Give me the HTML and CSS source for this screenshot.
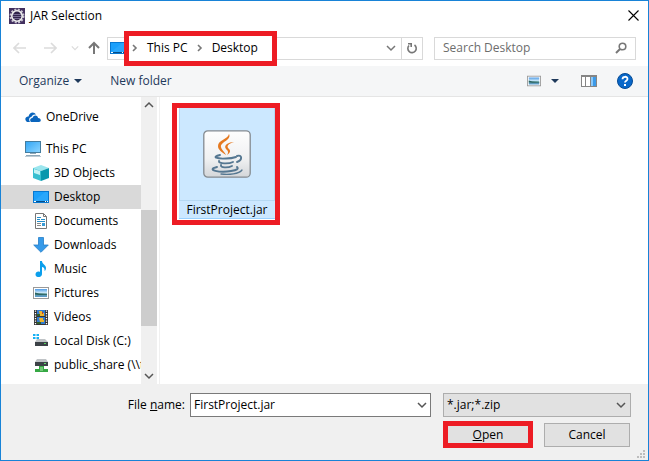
FILE: index.html
```html
<!DOCTYPE html>
<html lang="en">
<head>
<meta charset="utf-8">
<meta name="viewport" content="width=device-width, initial-scale=1">
<title>JAR Selection</title>
<link rel="stylesheet" href="styles.css">
</head>
<body>
<svg class="defs" width="0" height="0" aria-hidden="true">
  <defs>
    <linearGradient id="sky" x1="0" y1="0" x2="0" y2="1"><stop offset="0" stop-color="#4f9be6"/><stop offset=".5" stop-color="#d5eefa"/><stop offset=".6" stop-color="#5b9a9a"/><stop offset="1" stop-color="#5c9ad0"/></linearGradient>
    <linearGradient id="screen" x1="0" y1="0" x2="1" y2="1"><stop offset="0" stop-color="#35a7f5"/><stop offset="1" stop-color="#8ad4ff"/></linearGradient>
    <linearGradient id="tile" x1="0" y1="0" x2="0" y2="1"><stop offset="0" stop-color="#fefefe"/><stop offset=".6" stop-color="#f0f1f2"/><stop offset="1" stop-color="#d3d6d9"/></linearGradient>
    <symbol id="i-desktop" viewBox="0 0 16 16"><path fill="#0878d1" d="M0 2h16v12H0z"/><path fill="#1ca0fb" d="M1 3h14v9H1z"/><path fill="#55bbff" d="M1 12L12 3h3v9z" opacity=".25"/><path fill="#064d87" d="M1 12h14v1H1z"/><path fill="#fff" d="M1 12h2v1H1zM12 12h1v1h-1zM14 12h1v1h-1z"/></symbol>
    <symbol id="i-picture" viewBox="0 0 16 16"><path fill="#999" d="M0 2h16v12H0z"/><path fill="#fff" d="M1 3h14v10H1z"/><path fill="url(#sky)" d="M2 4h12v8H2z"/><path fill="#2c6360" d="M2 7.500l4 1 8 .5v.700L6 10l-4-.5z"/></symbol>
    <symbol id="i-chev" viewBox="0 0 10 10"><path fill="none" stroke="currentColor" stroke-width="1.5" d="M1 3l4 4 4-4"/></symbol>
    <symbol id="i-right" viewBox="0 0 8 10"><path fill="none" stroke="currentColor" stroke-width="1.6" d="M2 2l3 3-3 3"/></symbol>
    <symbol id="i-arrow" viewBox="0 0 14 14"><path fill="none" stroke="currentColor" stroke-width="1.7" d="M1 7h12M6 2L1 7l5 5"/></symbol>
    <symbol id="i-tri" viewBox="0 0 8 4"><path fill="currentColor" d="M0 0h8L4 4z"/></symbol>
  </defs>
</svg>
<main class="window">
  <header class="titlebar">
    <svg class="icon" viewBox="0 0 16 16" aria-hidden="true"><path fill="#42305f" d="M0 0h16v16H0z"/><circle cx="8" cy="8" r="6.5" fill="none" stroke="#c9c3d1" stroke-width="2" stroke-dasharray="2 1.4"/><circle cx="8" cy="8" r="5.2" fill="#30234c" stroke="#eee" stroke-width="1.6"/><path stroke="#766b94" d="M4 6.5h8M4 8.5h8M5 10.5h6"/></svg>
    <h1 class="title">JAR Selection</h1>
    <button class="close" aria-label="Close"><svg width="11" height="11" viewBox="0 0 11 11"><path stroke="#000" stroke-width="1.1" d="M.5.5l10 10M10.5.5l-10 10"/></svg></button>
  </header>

  <nav class="navbar" aria-label="Location">
    <div class="history">
      <button class="plain faint" aria-label="Back"><svg width="14" height="14"><use href="#i-arrow"/></svg></button>
      <button class="plain faint flip" aria-label="Forward"><svg width="14" height="14"><use href="#i-arrow"/></svg></button>
      <button class="plain faint" aria-label="Recent locations"><svg width="8" height="8" viewBox="0 0 10 10"><use href="#i-chev" width="10" height="10"/></svg></button>
      <button class="plain up" aria-label="Up"><svg width="14" height="14" viewBox="0 0 14 14"><path fill="none" stroke="currentColor" stroke-width="2" d="M7 13V2M2 7l5-5 5 5"/></svg></button>
    </div>
    <div class="address">
      <svg class="icon" aria-hidden="true"><use href="#i-desktop"/></svg>
      <div class="crumbs">
        <svg class="sep" aria-hidden="true"><use href="#i-right"/></svg>
        <a href="#">This PC</a>
        <svg class="sep" aria-hidden="true"><use href="#i-right"/></svg>
        <a href="#">Desktop</a>
      </div>
      <button class="plain drop" aria-label="Previous locations"><svg width="10" height="10"><use href="#i-chev"/></svg></button>
      <button class="plain refresh" aria-label="Refresh"><svg width="12" height="12" viewBox="0 0 12 12"><path fill="none" stroke="currentColor" stroke-width="1.6" d="M8.5 3A4.2 4.2 0 1 1 3 3.5M2 1.7h3.2V5"/></svg></button>
    </div>
    <div class="search">
      <input type="search" aria-label="Search Desktop" placeholder="Search Desktop">
      <svg width="12" height="12" viewBox="0 0 12 12" aria-hidden="true"><circle cx="7.5" cy="4.5" r="3.3" fill="none" stroke="#777" stroke-width="1.6"/><path stroke="#777" stroke-width="2" d="M5 7L1 11"/></svg>
    </div>
  </nav>

  <div class="commands">
    <button class="plain command">Organize <svg class="tri" aria-hidden="true"><use href="#i-tri"/></svg></button>
    <button class="plain command">New folder</button>
    <div class="views">
      <button class="plain view" aria-label="Change view"><svg width="14" height="14" viewBox="0 0 16 16"><use href="#i-picture" width="16" height="16"/></svg><svg class="tri" aria-hidden="true"><use href="#i-tri"/></svg></button>
      <button class="plain" aria-label="Preview pane"><svg width="16" height="12" viewBox="0 0 16 12"><path fill="#858585" d="M0 0h16v12H0z"/><path fill="#fff" d="M1 2h3v9H1zM5 2h4v9H5z"/><path fill="#3c9ae8" d="M10 2h5v9h-5z"/><path fill="#8bc9fa" d="M10 2h2v9h-2z"/></svg></button>
      <button class="plain" aria-label="Help"><svg width="16" height="16" viewBox="0 0 16 16"><circle cx="8" cy="8" r="7.5" fill="#0867c9" stroke="#064b94"/><path fill="none" stroke="#fff" stroke-width="1.8" d="M5.5 6.2C5.5 3 10.5 3 10.5 6c0 1.700-2.500 1.700-2.500 3.500"/><path fill="#fff" d="M7 11h2v2H7z"/></svg></button>
    </div>
  </div>

  <div class="content">
    <aside class="sidebar">
      <ul class="tree">
        <li class="root"><a href="#"><svg class="icon" viewBox="0 0 16 16"><path fill="#0b65bd" d="M1 12C-1 9 2 7 3.500 7.500 4.500 3 9 2 11 5.500 8 5 6.500 7 6.500 8 4 8 3.500 11 5 13H2z"/><path fill="#0b65bd" d="M6 13C4 11 6 8.500 7.500 9 8 5.500 13 5.500 13 9c3.500 0 3.500 4 1 4z"/></svg>OneDrive</a></li>
        <li class="root"><a href="#"><svg class="icon" viewBox="0 0 16 16"><path fill="#447d9f" d="M0 0h16v12H0z"/><path fill="url(#screen)" d="M1 1h14v10H1z"/><path fill="#8fa8b8" d="M5 12h6v1H5zM1 14h14v1H1z"/><path fill="#bdcbd4" d="M0 15h16v1H0z"/></svg>This PC</a></li>
        <li><a href="#"><svg class="icon" viewBox="0 0 16 16"><path fill="#9ce6ee" d="M0 3l8-3 8 3-8 3z"/><path fill="#38bfd0" d="M0 3l8 3v10l-8-3z"/><path fill="#0997ad" d="M16 3L8 6v10l8-3z"/><path fill="#c3f3f5" d="M1 4l6 2v4L1 8z"/></svg>3D Objects</a></li>
        <li class="selected"><a href="#" aria-current="true"><svg class="icon"><use href="#i-desktop"/></svg>Desktop</a></li>
        <li><a href="#"><svg class="icon" viewBox="0 0 16 16"><path fill="#fff" stroke="#777" d="M2.500.5h8l3 3v12h-11z"/><path fill="none" stroke="#777" d="M10.500.5v3h3"/><path fill="none" stroke="#258ec9" d="M4 6.500h3M4 4.500h4M8 6.500h4M4 8.500h8"/><path stroke="#888" d="M4 10.500h4M4 12.500h4"/><path fill="#389bd6" d="M9 10h3v3H9z"/></svg>Documents</a></li>
        <li><a href="#"><svg class="icon" viewBox="0 0 16 16"><path fill="#369ae9" stroke="#257ec8" stroke-width=".8" d="M5.500.5h5V8h4.800L8 15.300.700 8h4.800z"/></svg>Downloads</a></li>
        <li><a href="#"><svg class="icon" viewBox="0 0 16 16"><path fill="#0b9fec" d="M7 0h2c0 3 4 4 4 7 0 2-1 3-1.500 3C12 7.500 10.500 6 9 6v7c0 4-6.500 4-6.500.5C2.500 11 5 10 7 11z"/></svg>Music</a></li>
        <li><a href="#"><svg class="icon"><use href="#i-picture"/></svg>Pictures</a></li>
        <li><a href="#"><svg class="icon" viewBox="0 0 16 16"><path fill="#343434" d="M1 1h14v15H1z"/><path stroke="#fff" stroke-width="1.300" stroke-dasharray="1.300 1.200" d="M2.500 1.500V16M13.500 1.500V16"/><path fill="#317bd0" d="M4 1h8v6H4zM4 8h8v7H4z"/><path fill="#edb52d" d="M6 2h3v2h2v3H7zM6 9h4v2h1v2H7z"/><path fill="#31602b" d="M4 5h3v2H4zM4 13h4v2H4z"/><path fill="#c83f28" d="M9 3h1v2H9z"/></svg>Videos</a></li>
        <li><a href="#"><svg class="icon" viewBox="0 0 16 16"><path fill="#17b1f4" d="M0 1h2.500v2H0zM3.500 1H6v2H3.500zM0 4h2.500v2H0zM3.500 4H6v2H3.500z"/><path fill="#bfc3c6" d="M4 6h8l3 3H2z"/><path fill="#3c4247" d="M2 9h13v4H2z"/><path fill="#55d35c" d="M11 10h2v1h-2z"/></svg>Local Disk (C:)</a></li>
        <li><a href="#"><svg class="icon" viewBox="0 0 16 16"><path fill="#bfc3c6" d="M4 2h9l2 3H2z"/><path fill="#3c4247" d="M2 5h13v4H2z"/><path fill="#62df6b" d="M11 6h2v1h-2z"/><path fill="#36a844" d="M6 9h5v3h4v3H2v-3h4z"/><path fill="#74c879" d="M7 10h3v4H7z"/></svg>public_share (\\t</a></li>
      </ul>
      <div class="scrollbar" aria-hidden="true">
        <span class="scroll-arrow turn"><svg width="10" height="10"><use href="#i-chev"/></svg></span>
        <span class="track-before"></span>
        <span class="thumb"></span>
        <span class="track-after"></span>
        <span class="scroll-arrow"><svg width="10" height="10"><use href="#i-chev"/></svg></span>
      </div>
    </aside>
    <section class="files" aria-label="Files">
      <button class="file">
        <span class="preview"><svg width="48" height="48" viewBox="0 0 48 48" aria-hidden="true">
          <rect x=".8" y=".8" width="46.400" height="46.400" rx="4" fill="url(#tile)" stroke="#848b91" stroke-width="1.300"/>
          <path fill="#e57920" d="M26 4c3 6-9 8-8 13 .4 3 4 5 5 8-4-3-8-5-8-9 0-6 10-7 11-12z"/>
          <path fill="#e57920" d="M31 12c-6 2-8 4-5 7 2 2 1 4-2 6 2-3 1-4-1-6-3-4 3-7 8-7z"/>
          <g fill="none" stroke="#557791" stroke-width="1.900" stroke-linecap="round"><path d="M17 25c-9 2-3 4 6 3.500 4 0 7-.5 10-1.500"/><path d="M16 31c-1 3 10 3 14 1"/><path d="M18 35c-1 3 7 3 11 1"/><path d="M34 26c5-2 6 4 0 6"/><path d="M14 37c-12 3 3 6 14 4 6-1 8-2 6-4"/><path stroke-width="1.300" d="M18 44c8 1 18 0 21-4"/></g>
        </svg></span>
        <span class="filename">FirstProject.jar</span>
      </button>
    </section>
  </div>

  <form class="footer">
    <label class="name-label" for="filename">File <u>n</u>ame:</label>
    <div class="combo">
      <input id="filename" type="text" value="FirstProject.jar">
      <button type="button" class="plain combo-drop" aria-label="Recent file names"><svg width="10" height="10"><use href="#i-chev"/></svg></button>
    </div>
    <div class="filter">
      <select aria-label="File type"><option>*.jar;*.zip</option></select>
      <svg width="10" height="10" aria-hidden="true"><use href="#i-chev"/></svg>
    </div>
    <div class="actions">
      <button type="button" class="open"><u>O</u>pen</button>
      <button type="button" class="cancel">Cancel</button>
    </div>
    <svg class="grip" viewBox="0 0 8 8" aria-hidden="true"><path fill="#bdbdbd" d="M6 0h2v2H6zM3 3h2v2H3zM6 3h2v2H6zM0 6h2v2H0zM3 6h2v2H3zM6 6h2v2H6z"/></svg>
  </form>
</main>
</body>
</html>
```

FILE: styles.css
```css
* { box-sizing: border-box; }

body {
  margin: 0;
  font: 12px/16px "Open Sans", "Noto Sans", sans-serif;
  color: #000;
}

button, input, select { font: inherit; color: inherit; }
svg { display: block; flex: none; }
a { color: inherit; text-decoration: none; }
.defs { position: absolute; }
.icon { width: 16px; height: 16px; }

.plain {
  display: flex;
  align-items: center;
  padding: 0;
  border: 0;
  background: none;
}

.window {
  display: flex;
  flex-direction: column;
  min-height: 100vh;
  border: 1px solid #1883d7;
  background: #fff;
}

.titlebar {
  display: flex;
  align-items: center;
  height: 29px;
  padding: 0 9px 0 8px;
  gap: 5px;
}
.title { flex: 1; margin: 0; font-size: 12px; font-weight: 400; }
.close { padding: 0; border: 0; background: none; }

.navbar {
  display: flex;
  align-items: center;
  height: 36px;
  padding: 0 12px;
}
.history { display: flex; align-items: center; gap: 14px; width: 94px; color: #777; }
.history .faint { color: #dcdcdc; }
.history .flip { transform: scaleX(-1); margin-left: 2px; }
.history .up { margin-left: -6px; }

.address {
  display: flex;
  flex: 1;
  align-items: center;
  height: 23px;
  padding-left: 2px;
  border: 1px solid #d9d9d9;
}
.crumbs {
  display: flex;
  align-items: center;
  gap: 8px;
  height: 35px;
  margin: 0 auto 0 -2px;
  padding: 0 14px 0 2px;
  border: 5px solid #ed1c24;
  background: #fff;
  z-index: 1;
}
.sep { width: 8px; height: 10px; color: #777; }
.drop { width: 20px; height: 21px; justify-content: center; color: #777; }
.refresh {
  width: 21px;
  height: 21px;
  justify-content: center;
  border-left: 1px solid #d9d9d9;
  color: #777;
}

.search {
  display: flex;
  align-items: center;
  width: 202px;
  height: 23px;
  margin-left: 11px;
  padding: 0 8px;
  border: 1px solid #d9d9d9;
}
.search input { flex: 1; min-width: 0; padding: 0; border: 0; outline: 0; background: none; }
.search input::placeholder { color: #6d6d6d; opacity: 1; }

.commands {
  display: flex;
  align-items: center;
  height: 31px;
  padding: 0 15px 0 18px;
  gap: 28px;
  border-bottom: 1px solid #e5e5e5;
  background: #f5f6f7;
  color: #1e395b;
}
.command { gap: 5px; }
.tri { width: 8px; height: 4px; }
.views { display: flex; align-items: center; gap: 20px; margin-left: auto; }
.view { gap: 10px; margin-right: 2px; }

.content { display: flex; flex: 1; }
.sidebar { display: flex; width: 159px; padding-right: 2px; border-right: 1px solid #f0f0f0; }
.tree {
  flex: 1;
  min-width: 0;
  margin: 0;
  padding: 8px 0 0;
  list-style: none;
}
.tree a {
  display: flex;
  align-items: center;
  gap: 5px;
  height: 24px;
  padding-left: 32px;
  white-space: nowrap;
}
.tree .root a { padding-left: 24px; }
.root + .root { margin-top: 8px; }
.selected { background: #d9d9d9; }

.scrollbar { display: flex; flex-direction: column; width: 16px; background: #f0f0f0; color: #555; }
.scroll-arrow { display: flex; align-items: center; justify-content: center; height: 17px; }
.turn { transform: rotate(180deg); }
.track-before { flex: 96; }
.thumb { flex: 116; background: #cdcdcd; }
.track-after { flex: 41; }

.files { flex: 1; padding: 6px 12px; }
.file {
  display: flex;
  flex-direction: column;
  width: 108px;
  height: 122px;
  padding: 0 0 1px 2px;
  border: 5px solid #ed1c24;
  background: #fff;
}
.preview {
  display: flex;
  flex: 1;
  align-items: center;
  justify-content: center;
  width: 100%;
  border: 1px solid #b5d8f2;
  border-top: 0;
  background: #cce8ff;
}
.filename { width: 100%; border-bottom: 1px solid #99d1ff; background: #cce8ff; line-height: 17px; }

.footer {
  position: relative;
  display: grid;
  grid-template-columns: 184px 1fr 188px;
  column-gap: 12px;
  row-gap: 4px;
  align-items: center;
  padding: 9px 17px 12px 0;
  background: #f0f0f0;
}
.name-label { text-align: right; }
.combo {
  display: flex;
  height: 24px;
  margin-left: -7px;
  border: 1px solid #7a7a7a;
  background: #fff;
}
.combo input { flex: 1; min-width: 0; padding: 0 3px; border: 0; outline: 0; background: none; }
.combo-drop { width: 17px; justify-content: center; color: #555; }
.filter {
  display: flex;
  align-items: center;
  height: 24px;
  padding-right: 4px;
  border: 1px solid #adadad;
  background: #e1e1e1;
  color: #555;
}
.filter select {
  flex: 1;
  min-width: 0;
  padding: 0 3px;
  border: 0;
  appearance: none;
  background: none;
  color: #000;
}
.actions { display: flex; align-items: center; gap: 11px; grid-column: 3; }
.open { width: 90px; height: 27px; padding: 0; border: 5px solid #ed1c24; background: #e1e1e1; line-height: 16px; }
.cancel { width: 86px; height: 24px; padding: 0; border: 1px solid #adadad; background: #e1e1e1; }
.grip { position: absolute; right: 3px; bottom: 2px; width: 8px; height: 8px; }
```
